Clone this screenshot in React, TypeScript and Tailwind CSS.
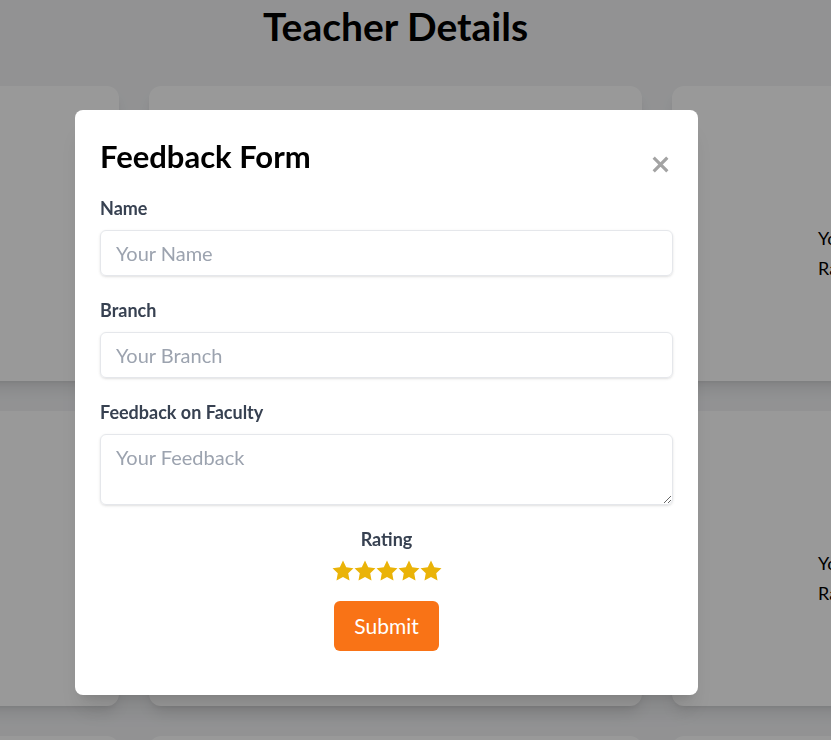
import React, { useState } from 'react';

const teachers = [
  { name: 'Dr. Anita Sharma', exp: 'Your Subject: Mathematics', rating: 'Rating: 4.5' },
  { name: 'Prof. Rajesh Kumar', exp: 'Your Subject: Physics', rating: 'Rating: 4.2' },
  { name: 'Dr. Meera Iyer', exp: 'Your Subject: Chemistry', rating: 'Rating: 4.8' },
];

function Star() {
  return (
    <svg viewBox="0 0 24 24" className="w-[22px] h-[22px] fill-[#eab308]">
      <path d="M12 0.6l3.5 7.2 7.9 1.1-5.7 5.5 1.4 7.9L12 18.5l-7.1 3.8 1.4-7.9L0.6 8.9l7.9-1.1z" />
    </svg>
  );
}

function TeacherCard({ exp, rating }: { exp: string; rating: string }) {
  return (
    <div className="w-[493px] h-[295px] shrink-0 bg-white rounded-xl shadow-lg flex items-center pl-[146px] pt-[38px]">
      <div className="text-lg leading-[30px] text-black whitespace-nowrap">
        <p>{exp}</p>
        <p>{rating}</p>
      </div>
    </div>
  );
}

export default function App() {
  const [name, setName] = useState('');
  const [branch, setBranch] = useState('');
  const [feedback, setFeedback] = useState('');

  const label = 'block text-lg leading-6 font-bold text-[#374151] mb-[10px]';
  const field =
    'w-full border border-[#e5e7eb] rounded-md shadow-sm px-[15px] py-2 text-xl leading-7 text-[#111827] placeholder:text-[#9ca3af] outline-none';

  return (
    <div className="h-[740px] bg-[#f3f4f6] overflow-hidden font-['Lato',sans-serif]">
      {/* Page */}
      <div className="w-[791px]">
        <h1 className="pt-[4px] text-[39px] leading-[44px] font-bold text-black text-center">Teacher Details</h1>
      </div>
      <div className="mt-[38px] flex flex-col gap-[30px] -ml-[374px]">
        {[0, 1, 2].map((row) => (
          <div key={row} className="flex gap-[30px]">
            {teachers.map((t) => (
              <TeacherCard key={t.name} exp={t.exp} rating={t.rating} />
            ))}
          </div>
        ))}
      </div>

      {/* Modal */}
      <div className="fixed inset-0 bg-black/40 pt-[110px] pl-[75px]">
        <div className="w-[623px] h-[585px] bg-white rounded-lg shadow-xl px-[25px] pt-[24px]">
          <div className="flex items-start justify-between">
            <h2 className="text-[31px] leading-[44px] font-bold text-black">Feedback Form</h2>
            <button className="mt-[22px] mr-[4px]">
              <svg viewBox="0 0 18 18" className="w-[17px] h-[17px]" stroke="#a3a3a3" strokeWidth="3.4" strokeLinecap="square">
                <path d="M3 3l12 12M15 3L3 15" />
              </svg>
            </button>
          </div>

          <form className="mt-[18px]" onSubmit={(e) => e.preventDefault()}>
            <label className={label}>Name</label>
            <input value={name} onChange={(e) => setName(e.target.value)} placeholder="Your Name" className={field} />

            <label className={label + ' mt-[22px]'}>Branch</label>
            <input value={branch} onChange={(e) => setBranch(e.target.value)} placeholder="Your Branch" className={field} />

            <label className={label + ' mt-[22px]'}>Feedback on Faculty</label>
            <textarea
              value={feedback}
              onChange={(e) => setFeedback(e.target.value)}
              placeholder="Your Feedback"
              className={field + ' block h-[71px]'}
            />

            <div className="mt-[22px] flex flex-col items-center">
              <span className="text-lg leading-6 font-bold text-[#374151]">Rating</span>
              <div className="mt-[9px] flex">
                {[1, 2, 3, 4, 5].map((i) => (
                  <Star key={i} />
                ))}
              </div>
              <button type="submit" className="mt-[19px] bg-[#f97316] text-white text-[21px] leading-7 px-5 py-[11px] rounded-md">
                Submit
              </button>
            </div>
          </form>
        </div>
      </div>
    </div>
  );
}
